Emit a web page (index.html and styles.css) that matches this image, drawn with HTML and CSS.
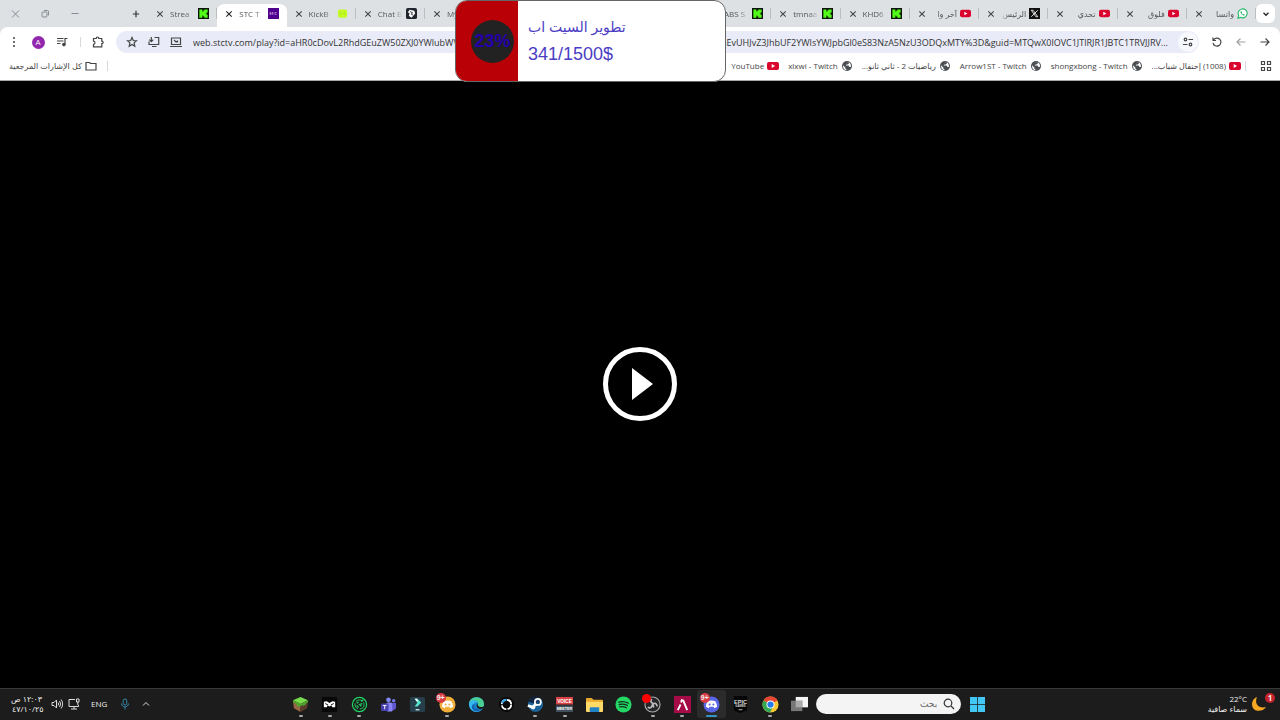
FILE: index.html
```html
<!DOCTYPE html>
<html lang="ar">
<head>
<meta charset="utf-8">
<title>STC TV</title>
<link rel="stylesheet" href="styles.css">
</head>
<body>
<svg class="defs" aria-hidden="true">
  <symbol id="close" viewBox="0 0 8 8"><path d="M1.3 1.3l5.4 5.4M6.7 1.3L1.3 6.7" fill="none" stroke="currentColor" stroke-width="1.1"/></symbol>
  <symbol id="kick" viewBox="0 0 12 12"><path fill="#0b1408" d="M0 0h12v12H0z"/><path fill="#53fc18" d="M1.5 1.5h3.3v2.4h1V2.7h1.1V1.5h3.6v3.3H9.4v1.1H8.3v.4h1.1v1.1h1.1v3.1H6.9V9.4H5.8V8.2h-1v2.3H1.5z"/></symbol>
  <symbol id="yt" viewBox="0 0 12 12"><rect y="2" width="12" height="8" rx="2" fill="#d9052f"/><path d="M4.7 4v4l3.4-2z" fill="#fff"/></symbol>
  <symbol id="globe" viewBox="0 0 12 12"><circle cx="6" cy="6" r="5" fill="#4b4f54"/><path d="M2 5.3l2.3 2.1v1l1.2 1v.8C3 10 1.900 8 2 5.300zM5 2.200h3v1L6.700 4.400H5.500L4.600 5.600h3l.9 1.300h1.300c.4-1.600 0-3-1-4L7.600 2z" fill="#fff"/></symbol>
</svg>

<div class="browser">
  <div class="tabstrip">
    <div class="window-controls">
      <button aria-label="إغلاق"><svg viewBox="0 0 10 10"><path d="M2 1.500l7 7M9 1.500l-7 7" /></svg></button>
      <button aria-label="استعادة"><svg viewBox="0 0 10 10"><rect x="2" y="3" width="5" height="5" rx="1"/><path d="M4 1.500h3.500q1 0 1 1V6.500"/></svg></button>
      <button aria-label="تصغير"><svg viewBox="0 0 10 10"><path d="M1.500 4.500h7"/></svg></button>
    </div>
    <button class="new-tab" aria-label="علامة تبويب جديدة"><svg viewBox="0 0 8 8"><path d="M4 .8v6.400M.8 4h6.400" fill="none" stroke="#333" stroke-width="1.200"/></svg></button>
    <div class="tabs">
      <div class="tab"><button aria-label="إغلاق"><svg><use href="#close"/></svg></button><span>Strea</span><svg class="fav"><use href="#kick"/></svg></div>
      <div class="tab active"><button aria-label="إغلاق"><svg><use href="#close"/></svg></button><span>STC T</span><svg class="fav" viewBox="0 0 12 12"><path fill="#4f008c" d="M0 0h12v12H0z"/><path d="M3.700 5H2v1h1.500v1H1.800M5 4.500V7h1M4.500 5.300H6M9.500 5H7.500v2h2" stroke="#e2c4f4" stroke-width=".6" fill="none"/></svg></div>
      <div class="tab"><button aria-label="إغلاق"><svg><use href="#close"/></svg></button><span>KickB</span><svg class="fav" viewBox="0 0 12 12"><rect x="1" y="1.500" width="10" height="9" rx="2" fill="#c3fa21"/><path d="M4 5v2M8 5v2" stroke="#93da2a"/></svg></div>
      <div class="tab"><button aria-label="إغلاق"><svg><use href="#close"/></svg></button><span>Chat B</span><svg class="fav" viewBox="0 0 12 12"><rect width="12" height="12" rx="2" fill="#20242c"/><path d="M4 2l5 1 1 3-4 4.500-3-2 1-2.500-2-1.500z" fill="#fff"/><path d="M4.500 4l2.500 1-1 2 1.500.5" fill="none" stroke="#20242c"/></svg></div>
      <div class="tab"><button aria-label="إغلاق"><svg><use href="#close"/></svg></button><span>My</span><svg class="fav"></svg></div>
      <div class="tab"></div>
      <div class="tab"></div>
      <div class="tab"></div>
      <div class="tab"><button aria-label="إغلاق"><svg><use href="#close"/></svg></button><span>ABS S</span><svg class="fav"><use href="#kick"/></svg></div>
      <div class="tab"><button aria-label="إغلاق"><svg><use href="#close"/></svg></button><span>tmnaa</span><svg class="fav"><use href="#kick"/></svg></div>
      <div class="tab"><button aria-label="إغلاق"><svg><use href="#close"/></svg></button><span>KHD6</span><svg class="fav"><use href="#kick"/></svg></div>
      <div class="tab"><button aria-label="إغلاق"><svg><use href="#close"/></svg></button><span dir="rtl">آخر وا</span><svg class="fav"><use href="#yt"/></svg></div>
      <div class="tab"><button aria-label="إغلاق"><svg><use href="#close"/></svg></button><span dir="rtl">الرئيس</span><svg class="fav" viewBox="0 0 12 12"><path d="M0 0h12v12H0z" fill="#111"/><path d="M2.500 2.500h2l5 7h-2zM9.500 2.500L2.500 9.500" fill="none" stroke="#fff" stroke-width=".9"/></svg></div>
      <div class="tab"><button aria-label="إغلاق"><svg><use href="#close"/></svg></button><span dir="rtl">تحدي</span><svg class="fav"><use href="#yt"/></svg></div>
      <div class="tab"><button aria-label="إغلاق"><svg><use href="#close"/></svg></button><span dir="rtl">فلوق</span><svg class="fav"><use href="#yt"/></svg></div>
      <div class="tab"><button aria-label="إغلاق"><svg><use href="#close"/></svg></button><span dir="rtl">واتسا</span><svg class="fav" viewBox="0 0 12 12"><path d="M1 11l.8-2.800A4.900 4.900 0 1 1 3.800 10.200z" fill="#fff" stroke="#25b866" stroke-width="1.200"/><path d="M4 3.500c-1 1.500 2 5 4 4.800l.5-1-1.300-.8-.7.600-1.500-1.600.5-.7-.5-1.300z" fill="#25b866"/></svg></div>
    </div>
    <button class="tab-search" aria-label="بحث في علامات التبويب"><svg viewBox="0 0 8 8"><path d="M1.500 2.800L4 5.300l2.500-2.500" fill="none" stroke="#222" stroke-width="1.300"/></svg></button>
  </div>

  <div class="toolbar">
    <div class="actions">
      <button aria-label="القائمة"><svg viewBox="0 0 12 12"><g fill="#444"><circle cx="6" cy="2" r="1"/><circle cx="6" cy="6" r="1"/><circle cx="6" cy="10" r="1"/></g></svg></button>
      <button class="avatar">A</button>
      <button aria-label="الوسائط"><svg class="line" viewBox="0 0 12 12"><path d="M1 2.500h6.500M1 5h6.500M1 7.500h3.500M9 8.500V2.500h2.500"/><circle cx="7.900" cy="8.600" r="1.200" fill="#444"/></svg></button>
      <i class="divider"></i>
      <button aria-label="الإضافات"><svg class="line" viewBox="0 0 12 12"><path d="M1.500 2.500h2.700c0-2 2.600-2 2.600 0h3v2.700c1.800 0 1.800 2.400 0 2.400v3.200H1.500V8.400c2-.2 2-3 0-3.200z"/></svg></button>
    </div>
    <div class="omnibox">
      <button aria-label="إضافة إشارة"><svg class="line" viewBox="0 0 12 12"><path d="M6 1.500l1.300 3 3.200.3-2.400 2.100.7 3.300L6 8.500l-2.800 1.700.7-3.300-2.400-2.100 3.200-.3z"/></svg></button>
      <button aria-label="تثبيت"><svg class="line" viewBox="0 0 12 12"><path d="M6.500 1.500h4.200v7H1V5.500M4 10.500h4.500M3.300 1v4.500M1.300 3.700l2 2 2-2"/></svg></button>
      <button aria-label="بث"><svg class="line" viewBox="0 0 12 12"><path d="M1.500 2h9v6.500h-9zM0 10.500h12M4 4l2 2 1.500-1M7.500 6.500V4.500"/></svg></button>
      <input aria-label="العنوان" dir="ltr" value="web.stctv.com/play?id=aHR0cDovL2RhdGEuZW50ZXJ0YWlubWVudC50di50aGVwbGF0Zm9ybS5ldS9lbnRlcnRhaW5tZW50L2RhdGEvUHJvZ3JhbUF2YWlsYWJpbGl0eS83NzA5NzU3ODQxMTY%3D&amp;guid=MTQwX0lOVC1JTlRJR1JBTC1TRVJJRV...">
      <button class="tune" aria-label="معلومات الموقع"><svg class="line" viewBox="0 0 12 12"><circle cx="3.500" cy="3.500" r="1.300"/><path d="M6.500 3.500H11M1 8.500h4.500"/><circle cx="8.500" cy="8.500" r="1.300"/></svg></button>
    </div>
    <div class="navigation">
      <button aria-label="إعادة التحميل"><svg class="line" viewBox="0 0 12 12"><path d="M2.500 4A4 4 0 1 1 2 7M2 1.500v3h3"/></svg></button>
      <button class="muted" aria-label="للأمام"><svg class="line" viewBox="0 0 12 12"><path d="M10.500 6H2M5.500 2.500L2 6l3.500 3.500"/></svg></button>
      <button aria-label="رجوع"><svg class="line" viewBox="0 0 12 12"><path d="M1.500 6H10M6.500 2.500L10 6 6.500 9.500"/></svg></button>
    </div>
  </div>

  <nav class="bookmarks">
    <a href="#" class="all"><span dir="rtl">كل الإشارات المرجعية</span><svg class="line" viewBox="0 0 12 12"><path d="M1 2.500h3.500l1 1H11v6.500H1z"/></svg></a>
    <i class="divider"></i>
    <div class="links">
      <a href="#"><span>YouTube</span><svg><use href="#yt"/></svg></a>
      <a href="#"><span>xlxwi - Twitch</span><svg><use href="#globe"/></svg></a>
      <a href="#"><span dir="rtl">رياضيات 2 - ثاني ثانو...</span><svg><use href="#globe"/></svg></a>
      <a href="#"><span>Arrow1ST - Twitch</span><svg><use href="#globe"/></svg></a>
      <a href="#"><span>shongxbong - Twitch</span><svg><use href="#globe"/></svg></a>
      <a href="#"><span dir="rtl">(1008) إحتفال شباب...</span><svg><use href="#yt"/></svg></a>
    </div>
    <i class="divider"></i>
    <button class="apps-grid" aria-label="مجموعات"><svg class="line" viewBox="0 0 12 12"><path d="M1.500 1.500h3v3h-3zM7.500 1.500h3v3h-3zM1.500 7.500h3v3h-3zM7.500 7.500h3v3h-3z"/></svg></button>
  </nav>
</div>

<main class="player">
  <button aria-label="تشغيل"><svg viewBox="0 0 76 76"><circle cx="38" cy="38" r="34.500" fill="none" stroke="#fff" stroke-width="5"/><path d="M30 22v32l21-16z" fill="#fff"/></svg></button>
</main>

<footer class="taskbar">
  <div class="tray">
    <time><span dir="rtl">١٢:٠٣ ص</span><span>٤٧/١٠/٢٥</span></time>
    <svg class="volume" viewBox="0 0 12 12"><path d="M1 4.500h2L5.500 2v8L3 7.500H1zM7 4.500q1.200 1.500 0 3M8.500 3q2.300 3 0 6M10 1.500q3.400 4.500 0 9"/></svg>
    <svg class="network" viewBox="0 0 12 12"><path d="M7 1.500H1v7h9.500V7M3 11h6M6 8.500V11M8.500 1h2.500v3H8.500zM9.800 4v3"/></svg>
    <span class="lang">ENG</span>
    <svg class="mic" viewBox="0 0 12 12"><rect x="4.200" y="1" width="3.600" height="6" rx="1.800"/><path d="M2.500 5.500c0 4.500 7 4.500 7 0M6 9v2.500"/></svg>
    <button aria-label="الرموز المخفية"><svg viewBox="0 0 12 12"><path d="M3 7.500l3-3 3 3"/></svg></button>
  </div>

  <div class="center">
    <div class="apps">
      <button class="running" aria-label="Minecraft"><svg viewBox="0 0 18 18"><path d="M9 1l8 3.500-8 4-8-4z" fill="#78dc4c"/><path d="M1 4.500l8 4V17l-7-4z" fill="#986547"/><path d="M17 4.500l-8 4V17l7-4z" fill="#593b2b"/><path d="M1 4.500l8 4v3l-2-1v1.500L5 10V8.500L1 7zM17 4.500l-8 4v2l3-1v1l3-2v-1l2-1z" fill="#4da62d"/></svg></button>
      <button class="running" aria-label="Mask"><svg viewBox="0 0 18 18"><path d="M1 1h16v16H1z" fill="#080808"/><path d="M3 6l3-.5 3 2 3-2 3 .5v6h-3l-1-2-2 1-2-1-1 2H3z" fill="#fff"/><path d="M4.500 8l3 1.500M13.500 8l-3 1.500" stroke="#080808"/></svg></button>
      <button class="running" aria-label="Radar"><svg viewBox="0 0 18 18"><g fill="none" stroke="#20d565"><circle cx="9" cy="9" r="7.500" stroke-width="1.300"/><circle cx="9" cy="9" r="4.800" stroke-dasharray="7 2"/><path d="M6 7.500l2-1M12 8l-3 1 2 2M8 12l-2-2M13 4l-2 2" stroke-width="1.300"/></g></svg></button>
      <button aria-label="Teams"><svg viewBox="0 0 18 18"><circle cx="9" cy="4" r="2.500" fill="#8087f4"/><circle cx="14.500" cy="5" r="1.900" fill="#7175e3"/><rect x="6" y="7" width="8" height="9.500" rx="3" fill="#8a84f5"/><path d="M13 7.500h4V12q0 3-4 3z" fill="#6158cf"/><rect x="1" y="8" width="8" height="8" rx="1.500" fill="#4440ae"/><path d="M3 10h4M5 10v4" stroke="#fff"/></svg></button>
      <button aria-label="Filmora"><svg viewBox="0 0 18 18"><rect x="1" y="1" width="16" height="16" rx="2" fill="#263e49"/><path d="M6 3h3l4 4-4 4H6l3-4z" fill="#53e3cf"/><path d="M6 3h3v4z" fill="#fff"/><path d="M7 14.500h4" stroke="#c5dbe0" stroke-width="1.500"/></svg></button>
      <button class="running" aria-label="Discord Canary"><svg viewBox="0 0 18 18"><circle cx="9" cy="9" r="8.500" fill="#f1af39"/><path d="M5 5.500q4-1.500 8 0 2 3 2 6l-3 1.500-1-1.500H7L6 13l-3-1.500q0-3 2-6z" fill="#fff"/><circle cx="7" cy="9" r="1.100" fill="#f1af39"/><circle cx="11" cy="9" r="1.100" fill="#f1af39"/></svg><b class="badge">9+</b></button>
      <button aria-label="Edge"><svg viewBox="0 0 18 18"><circle cx="9" cy="9" r="8" fill="#1683cd"/><path d="M1 8C2-1 17-1 17 9c0 4-6 4-7 1 2-3-1-6-4-5C3 5 1 7 1 8z" fill="#48cf91"/><path d="M1 8c1-5 8-5 9-1-3-1-5 2-3 5 2 3 6 3 8 1-4 7-14 4-14-5z" fill="#36b7ed"/><path d="M7 8c-2 5 2 7 8 5-4 5-10 4-11-1 0-2 1-3 3-4z" fill="#1260ae"/><path d="M10 8c0 4 3 4 7 3l-1 2c-4 2-9-1-6-5z" fill="#1c1c1c"/></svg></button>
      <button aria-label="Sync"><svg viewBox="0 0 18 18"><circle cx="9" cy="9" r="8" fill="#080808"/><circle cx="9" cy="9" r="5" fill="none" stroke="#fff" stroke-width="1.800" stroke-dasharray="6.500 1.350"/><path d="M4 7.500Q5.500 4 9 4" stroke="#36aaf0" stroke-width="2" fill="none"/></svg></button>
      <button class="running" aria-label="Steam"><svg viewBox="0 0 18 18"><circle cx="9" cy="9" r="8" fill="#1a6298"/><path d="M1 6a8 8 0 0 1 12-4L9 8z" fill="#12243f"/><path d="M1 10l5 2 4-4" stroke="#fff" stroke-width="3" fill="none"/><circle cx="11.500" cy="6.300" r="3.200" fill="#1a4268" stroke="#fff" stroke-width="1.800"/><circle cx="6.500" cy="12" r="2.200" fill="#fff"/></svg></button>
      <button class="running" aria-label="Voicemeeter"><svg viewBox="0 0 18 18"><path d="M0 1h18v8H0z" fill="#d94345"/><path d="M0 10h18v7H0z" fill="#42505d"/><g fill="#fff" font-family="Liberation Sans" font-weight="bold" text-anchor="middle"><text x="9" y="7" font-size="5">VOICE</text><text x="9" y="15" font-size="4">MEETER</text></g></svg></button>
      <button aria-label="مستكشف الملفات"><svg viewBox="0 0 18 18"><path d="M0 3q0-1 1-1h5l2 2h9q1 0 1 1v11H0z" fill="#e8a92d"/><path d="M0 6h18v10q0 1-1 1H1q-1 0-1-1z" fill="#ffda69"/><path d="M4 17v-4q0-1 1-1h8q1 0 1 1v4z" fill="#2182c5"/></svg></button>
      <button aria-label="Spotify"><svg viewBox="0 0 18 18"><circle cx="9" cy="9" r="8.500" fill="#24d865"/><path d="M4 6.500q5-1.500 10 1M4.500 9q4.500-1 8.500 1M5 11.500q4-1 7 1" stroke="#14311e" stroke-width="1.400" fill="none" stroke-linecap="round"/></svg></button>
      <button class="running" aria-label="OBS"><svg viewBox="0 0 18 18"><circle cx="9" cy="9" r="8" fill="#24262a" stroke="#aaa" stroke-width="1.200"/><path d="M8 3q-2 4 2 5M9 9q4-3 5 2M9 9q-1 5-5 3M9 9l1.500 3" stroke="#bbb" stroke-width="1.800" fill="none"/></svg><b class="record"></b></button>
      <button class="running" aria-label="Alight"><svg viewBox="0 0 18 18"><path d="M0 0h18v18H0z" fill="#a50b46"/><path d="M4 15l3-6M9.500 4l4.500 11M8.500 3.500L7.500 7" stroke="#fff" stroke-width="2" fill="none"/></svg></button>
      <button class="running current" aria-label="Discord"><svg viewBox="0 0 18 18"><circle cx="9" cy="9" r="8.500" fill="#5865e8"/><path d="M5 5.500q4-1.500 8 0 2 3 2 6l-3 1.500-1-1.500H7L6 13l-3-1.500q0-3 2-6z" fill="#fff"/><circle cx="7" cy="9" r="1.100" fill="#5865e8"/><circle cx="11" cy="9" r="1.100" fill="#5865e8"/></svg><b class="badge">9+</b></button>
      <button aria-label="Epic Games"><svg viewBox="0 0 18 18"><path d="M2 0h14v15l-7 3-7-3z" fill="#050505"/><g fill="#ddd" font-family="Liberation Sans" font-weight="bold" text-anchor="middle"><text x="9" y="8" font-size="6">EPIC</text><text x="9" y="12" font-size="3">GAMES</text></g><path d="M7 14.500h4" stroke="#bbb"/></svg></button>
      <button class="running" aria-label="Chrome"><svg viewBox="0 0 18 18"><circle cx="9" cy="9" r="8.500" fill="#fcc934"/><path d="M9 9L1.600 4.800A8.500 8.500 0 0 1 16.400 4.800z" fill="#e94335"/><path d="M1.600 4.800A8.500 8.500 0 0 0 8.500 17.500L12 11 9 9z" fill="#34a853"/><circle cx="9" cy="9" r="4.200" fill="#fff"/><circle cx="9" cy="9" r="3.300" fill="#267ae9"/></svg></button>
      <button aria-label="عرض المهام"><svg viewBox="0 0 18 18"><path d="M5 1h13v11H5z" fill="#f5f5f5"/><path d="M0 5h12v11H0z" fill="#777"/><path d="M5 5h7v7H5z" fill="#aaa"/></svg></button>
    </div>
    <label class="search"><input dir="rtl" placeholder="بحث" aria-label="بحث"><svg viewBox="0 0 12 12"><circle cx="5" cy="5" r="3.800"/><path d="M8 8l3 3"/></svg></label>
    <button class="start" aria-label="ابدأ"><svg viewBox="0 0 16 16"><path d="M0 0h7.600v7.600H0zM8.400 0H16v7.600H8.400zM0 8.400h7.600V16H0zM8.400 8.400H16V16H8.400z" fill="#43c7f5"/></svg></button>
  </div>

  <div class="weather">
    <div dir="rtl"><span dir="ltr">22°C</span><span>سماء صافية</span></div>
    <span class="moon"><svg viewBox="0 0 16 16"><path d="M6 1C3 8 8 13 15 11 11 17 1 16 1 8c0-3 2-6 5-7z" fill="#f5a623"/></svg><b>1</b></span>
  </div>
</footer>

<aside class="goal">
  <div class="goal-side"><span>23%</span></div>
  <div class="goal-text"><p class="goal-title" dir="rtl">تطوير السيت اب</p><p>341/1500$</p></div>
</aside>
</body>
</html>
```

FILE: styles.css
```css
* { box-sizing: border-box; }
body {
  margin: 0;
  min-height: 100vh;
  display: flex;
  flex-direction: column;
  background: #000;
  color: #444;
  font: 8px/12px "Open Sans", "DejaVu Sans", sans-serif;
  overflow: hidden;
}
button, input { font: inherit; color: inherit; border: 0; padding: 0; margin: 0; background: none; outline: 0; }
button { display: flex; align-items: center; justify-content: center; flex: none; }
a { color: inherit; text-decoration: none; }
svg { display: block; flex: none; width: 12px; height: 12px; }
.defs { position: absolute; width: 0; height: 0; }
.line { fill: none; stroke: #444; stroke-width: 1.2; }

.browser { background: #dde1e4; border-bottom: 1px solid #aaa; }
.tabstrip { display: flex; align-items: center; height: 27px; }
.window-controls { display: flex; width: 124px; }
.window-controls button { width: 30px; }
.window-controls svg { width: 10px; height: 10px; fill: none; stroke: #868b91; stroke-width: 1; }
.new-tab { width: 24px; }
.new-tab svg { width: 8px; height: 8px; }
.tabs { display: flex; flex: 1; align-self: stretch; padding-top: 4px; }
.tab {
  display: flex;
  align-items: center;
  flex: 1;
  min-width: 0;
  padding: 0 8px 4px 8px;
  gap: 3px;
  background: linear-gradient(#b9bec3, #b9bec3) right 4px / 1px 11px no-repeat;
}
.tab button svg { width: 8px; height: 8px; }
.tab span {
  flex: 1;
  min-width: 0;
  margin-left: 3px;
  white-space: nowrap;
  color: #555;
  mask-image: linear-gradient(to right, #000 60%, transparent);
}
.tab span[dir="rtl"] { mask-image: linear-gradient(to left, #000 70%, transparent); }
.fav { width: 11px; height: 11px; }
.tab.active { background: #fff; border-radius: 7px 7px 0 0; color: #222; }

.tab-search { width: 19px; height: 19px; margin-right: 5px; border-radius: 6px; background: #fff; }
.tab-search svg { width: 8px; height: 8px; }

.toolbar { display: flex; align-items: center; height: 30px; background: #fff; border-radius: 8px 8px 0 0; }
.actions { display: flex; align-items: center; width: 116px; padding: 0 12px 0 8px; justify-content: space-between; }
.avatar { width: 13px; height: 13px; border-radius: 50%; background: #9227ae; color: #fff; }
.divider { width: 1px; height: 10px; background: #d5d8dd; }
.omnibox { display: flex; align-items: center; gap: 10px; flex: 1; min-width: 0; height: 22px; padding: 0 1px 0 10px; border-radius: 11px; background: #e9ecf8; }
.omnibox input { flex: 1; min-width: 0; height: 20px; margin-left: 1px; font-size: 9px; color: #333; text-overflow: ellipsis; }
.tune { width: 20px; height: 20px; border-radius: 50%; background: #f8f9fe; margin-left: -8px; }
.navigation { display: flex; align-items: center; justify-content: space-between; width: 81px; padding: 0 9px 0 12px; }
.muted { opacity: .5; }

.bookmarks { display: flex; align-items: center; height: 23px; padding: 0 8px 5px 9px; background: #fff; white-space: nowrap; }
.bookmarks a { display: flex; align-items: center; gap: 3px; }
.all { margin-right: 10px; }
.links { display: flex; flex: 1; justify-content: flex-end; gap: 9px; margin-right: 4px; }
.apps-grid { margin-left: 14px; }

.player { flex: 1; display: flex; align-items: center; justify-content: center; padding-bottom: 2px; }
.player svg { width: 76px; height: 76px; }

.taskbar {
  display: grid;
  grid-template-columns: 1fr 55.2% 1fr;
  align-items: center;
  height: 32px;
  padding: 0 4px 1px 0;
  background: #1c1c1c;
  border-top: 1px solid #383838;
  color: #eee;
}
.tray { display: flex; align-items: center; padding-left: 12px; }
.tray svg { fill: none; stroke: #ddd; stroke-width: 1; }
.tray time { display: flex; flex-direction: column; width: 30px; line-height: 10px; white-space: nowrap; text-align: right; }
.volume { margin-left: 9px; }
.network { margin-left: 5px; }
.lang { margin-left: 11px; }
.tray .mic { margin-left: 12px; stroke: #3484a7; }
.tray button { margin-left: 9px; }

.center { display: flex; align-items: center; }
.apps { display: flex; flex: 1; }
.apps button { position: relative; flex: 1; height: 28px; }
.apps svg { width: 17px; height: 17px; }
.running::after { content: ""; position: absolute; bottom: 1px; width: 4px; height: 2px; border-radius: 1px; background: #aaa; }
.current { background: #2b2b2b; border-radius: 3px; }
.current::after { width: 11px; background: #3294c4; }
.badge { position: absolute; top: 3px; left: 3px; width: 10px; height: 10px; border-radius: 5px; background: #d83b42; font: bold 7px/10px "Liberation Sans", sans-serif; text-align: center; }
.record { position: absolute; top: 4px; left: 4px; width: 9px; height: 9px; border-radius: 50%; background: #f00; }
.search { display: flex; align-items: center; width: 145px; height: 20px; margin-left: 2px; padding: 0 6px; gap: 6px; border-radius: 10px; background: #f4f4f4; color: #555; }
.search input { flex: 1; min-width: 0; font-size: 9px; }
.search input::placeholder { color: #666; opacity: 1; }
.search svg { fill: none; stroke: #333; stroke-width: 1.2; }
.start { width: 29px; height: 28px; padding-left: 4px; }
.start svg { width: 15px; height: 15px; }

.weather { display: flex; align-items: center; justify-content: flex-end; gap: 4px; line-height: 10px; }
.weather div { display: flex; flex-direction: column; align-items: flex-start; white-space: nowrap; }
.moon { position: relative; width: 25px; }
.moon svg { width: 16px; height: 16px; }
.moon b { position: absolute; top: -3px; right: 1px; width: 10px; height: 10px; border-radius: 50%; background: #c8232c; text-align: center; }

.goal {
  position: absolute;
  top: 0;
  left: 50%;
  margin-left: -185px;
  display: flex;
  width: 271px;
  height: 82px;
  overflow: hidden;
  border: 1px solid #666;
  border-radius: 12px;
  background: #fff;
  color: #4b3cc4;
  font: 18px/27px "Liberation Sans", "DejaVu Sans", sans-serif;
}
.goal-side { display: flex; align-items: center; justify-content: flex-end; width: 62px; padding-right: 4px; background: #b90007; }
.goal-side span { width: 43px; border-radius: 50%; background: #222; color: #2500aa; font-weight: bold; line-height: 43px; text-align: center; }
.goal-text { padding: 13px 10px; }
.goal-text p { margin: 0; }
.goal-text .goal-title { font-size: 14px; }
```
